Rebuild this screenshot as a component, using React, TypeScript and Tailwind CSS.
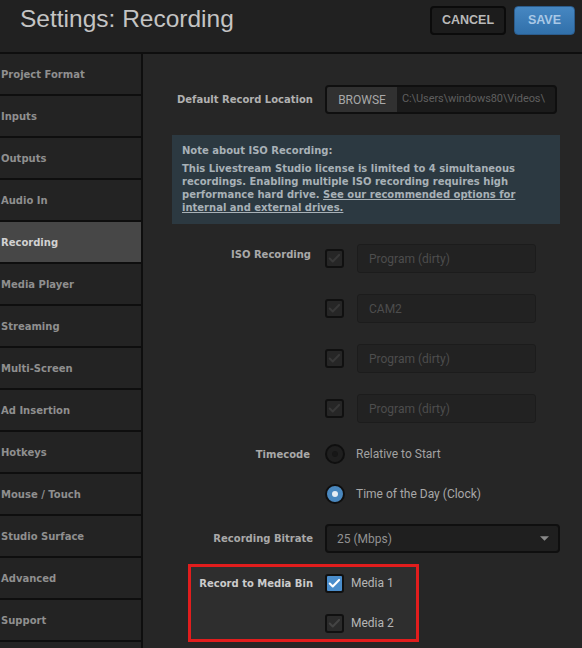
import React from "react";

const navItems = [
    "Project Format",
    "Inputs",
    "Outputs",
    "Audio In",
    "Recording",
    "Media Player",
    "Streaming",
    "Multi-Screen",
    "Ad Insertion",
    "Hotkeys",
    "Mouse / Touch",
    "Studio Surface",
    "Advanced",
    "Support",
    "",
];

const isoSources = ["Program (dirty)", "CAM2", "Program (dirty)", "Program (dirty)"];

function Check({ color }: { color: string }) {
    return (
        <svg viewBox="0 0 19 19" className="w-[15px] h-[15px]" fill="none">
            <path d="M3.5 9.5l3.8 3.8 8-8.3" stroke={color} strokeWidth={2.6} strokeLinecap="round" strokeLinejoin="round" />
        </svg>
    );
}

function Checkbox({ checked = false, dim = "#383838", bg = "bg-[#262626]" }: { checked?: boolean; dim?: string; bg?: string }) {
    return (
        <div
            className={
                checked
                    ? "w-[19px] h-[19px] shrink-0 rounded-[3px] border-2 border-[#101010] bg-[#4a8dcb] flex items-center justify-center"
                    : `w-[19px] h-[19px] shrink-0 rounded-[3px] border-2 border-[#101010] ${bg} flex items-center justify-center`
            }
        >
            <Check color={checked ? "#ffffff" : dim} />
        </div>
    );
}

export default function App() {
    const label = "font-['DejaVu_Sans',Verdana,sans-serif] font-bold text-[10px] leading-[13px]";
    const regular = "font-['Roboto',Arial,sans-serif] text-[12px]";

    return (
        <div className="w-[582px] h-[648px] overflow-hidden bg-[#262626] flex flex-col">
            {/* header */}
            <header className="h-[54px] shrink-0 bg-[#212121] border-b-2 border-[#0e0e0e] flex items-start justify-between pl-5 pr-[7px] pt-[5px]">
                <h1 className="font-['Liberation_Sans',Arial,sans-serif] text-[24.5px] leading-[28px] text-[#c4c4c4]">
                    Settings: Recording
                </h1>
                <div className="flex gap-2 mt-[1px] font-['Liberation_Sans',Arial,sans-serif] font-bold text-[12.5px]">
                    <button className="w-[76px] h-[29px] rounded-[4px] border-2 border-[#0b0b0b] bg-[#1c1c1c] text-[#b9b9b9]">
                        CANCEL
                    </button>
                    <button className="w-[61px] h-[29px] rounded-[4px] border border-[#2b5c8c] bg-gradient-to-b from-[#4687c2] to-[#3170aa] text-[#a9c8e6]">
                        SAVE
                    </button>
                </div>
            </header>

            <div className="flex flex-1 min-h-0">
                {/* sidebar */}
                <nav className="w-[143px] shrink-0 bg-[#0e0e0e] flex flex-col gap-[2px] pr-[2px]">
                    {navItems.map((item, i) => (
                        <div
                            key={i}
                            className={
                                item === "Recording"
                                    ? `h-[40px] shrink-0 pl-[1px] flex items-center bg-[#474747] text-[#d2d2d2] ${label}`
                                    : `h-[40px] shrink-0 pl-[1px] flex items-center bg-[#232323] text-[#8f8f8f] ${label}`
                            }
                        >
                            {item}
                        </div>
                    ))}
                </nav>

                {/* content */}
                <main className="flex-1 min-w-0 flex flex-col pt-[31px]">
                    <div className="flex items-center h-[29px]">
                        <div className={`w-[170px] text-right text-[#b1b1b1] ${label}`}>Default Record Location</div>
                        <div className="ml-[12px] w-[232px] h-[29px] flex rounded-[4px] border-2 border-[#0f0f0f] bg-[#1b1b1b] overflow-hidden">
                            <div className={`w-[70px] shrink-0 bg-[#313131] text-[#a9a9a9] flex items-center justify-center ${regular}`}>
                                BROWSE
                            </div>
                            <div className="pl-[5px] flex items-center whitespace-nowrap text-[#5f5f5f] font-['Roboto',Arial,sans-serif] text-[11px] tracking-[-0.1px]">
                                C:\Users\windows80\Videos\
                            </div>
                        </div>
                    </div>

                    <div className={`mt-[21px] ml-[29px] w-[388px] h-[89px] bg-[#2c3941] px-[10px] pt-[9px] text-[#a8b1b7] ${label}`}>
                        <p>Note about ISO Recording:</p>
                        <p className="mt-[5px]">
                            This Livestream Studio license is limited to 4 simultaneous
                            <br />
                            recordings. Enabling multiple ISO recording requires high
                            <br />
                            performance hard drive. <span className="underline">See our recommended options for</span>
                            <br />
                            <span className="underline">internal and external drives.</span>
                        </p>
                    </div>

                    <div className="mt-[20px] flex items-start">
                        <div className={`w-[168px] pt-[4px] text-right text-[#a9a9a9] ${label}`}>ISO Recording</div>
                        <div className="ml-[14px] flex flex-col gap-[21px]">
                            {isoSources.map((src, i) => (
                                <div key={i} className="flex items-center h-[29px]">
                                    <Checkbox />
                                    <div className={`ml-[13px] w-[179px] h-[29px] rounded-[3px] border border-[#1c1c1c] bg-[#222222] pl-[11px] flex items-center text-[#4d4d4d] ${regular}`}>
                                        {src}
                                    </div>
                                </div>
                            ))}
                        </div>
                    </div>

                    <div className="mt-[17px] flex items-start">
                        <div className={`w-[167px] h-[28px] flex items-center justify-end text-[#a9a9a9] ${label}`}>Timecode</div>
                        <div className="ml-[15px] flex flex-col gap-[12px]">
                            <div className="flex items-center h-[28px]">
                                <div className="w-[20px] h-[20px] rounded-full border-2 border-[#0f0f0f] bg-[#1f1f1f] flex items-center justify-center">
                                    <div className="w-[6px] h-[6px] rounded-full bg-[#171717]" />
                                </div>
                                <span className={`ml-[11px] text-[#a2a2a2] ${regular}`}>Relative to Start</span>
                            </div>
                            <div className="flex items-center h-[28px]">
                                <div className="w-[20px] h-[20px] rounded-full border-2 border-[#0f0f0f] bg-[#4a88bf] flex items-center justify-center">
                                    <div className="w-[6px] h-[6px] rounded-full bg-[#e8eef4]" />
                                </div>
                                <span className={`ml-[11px] text-[#a8a8a8] ${regular}`}>Time of the Day (Clock)</span>
                            </div>
                        </div>
                    </div>

                    <div className="mt-[16px] flex items-center h-[29px]">
                        <div className={`w-[170px] text-right text-[#a9a9a9] ${label}`}>Recording Bitrate</div>
                        <div className={`ml-[12px] w-[235px] h-[29px] rounded-[4px] border-2 border-[#0f0f0f] bg-[#1f1f1f] pl-[10px] pr-[9px] flex items-center justify-between text-[#929292] ${regular}`}>
                            <span>25 (Mbps)</span>
                            <svg viewBox="0 0 8 4" className="w-[9px] h-[5px]">
                                <path d="M0 0h8L4 4z" fill="#8a8a8a" />
                            </svg>
                        </div>
                    </div>

                    <div className="mt-[11px] ml-[45px] w-[231px] h-[78px] shrink-0 border-[3px] border-[#e11d1d] bg-[#2e2e2e] pt-[6px] flex items-start">
                        <div className={`w-[122px] h-[20px] flex items-center justify-end text-[#cbcbcb] ${label}`}>Record to Media Bin</div>
                        <div className="ml-[12px] flex flex-col gap-[20px]">
                            <div className="flex items-center h-[20px]">
                                <Checkbox checked />
                                <span className={`ml-[7px] text-[#b6b6b6] ${regular}`}>Media 1</span>
                            </div>
                            <div className="flex items-center h-[20px]">
                                <Checkbox dim="#444444" bg="bg-[#2b2b2b]" />
                                <span className={`ml-[7px] text-[#b6b6b6] ${regular}`}>Media 2</span>
                            </div>
                        </div>
                    </div>
                </main>
            </div>
        </div>
    );
}
